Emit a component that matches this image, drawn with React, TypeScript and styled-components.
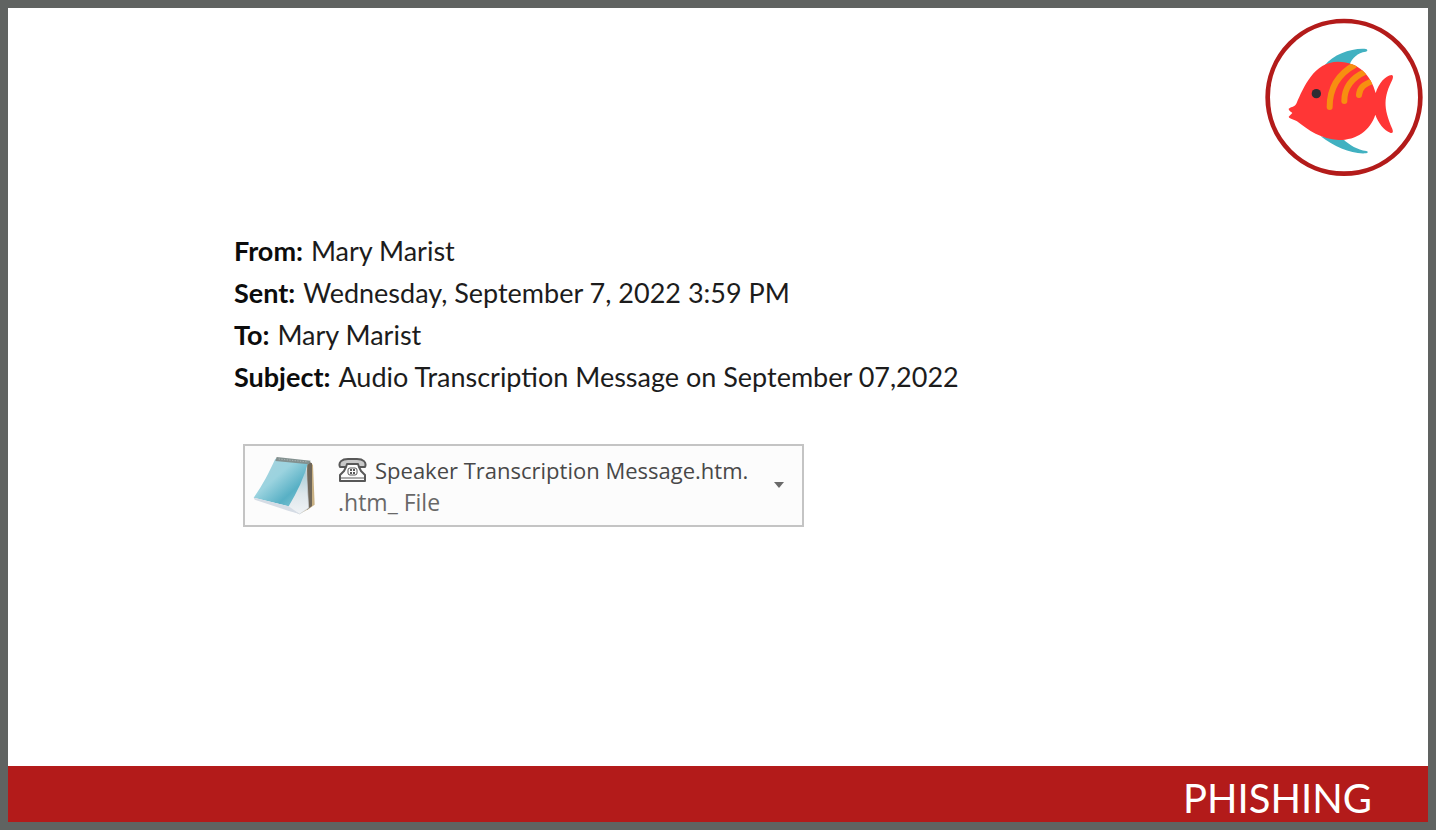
import React from "react";
import styled, { createGlobalStyle } from "styled-components";

const GlobalStyle = createGlobalStyle`
  * { box-sizing: border-box; }
  body { margin: 0; background: #606361; }
`;

const Frame = styled.div`
  display: flex;
  min-height: 100vh;
  padding: 8px;
  background: #606361;
`;

const Slide = styled.main`
  display: flex;
  flex: 1;
  flex-direction: column;
  background: #ffffff;
`;

const Header = styled.header`
  display: flex;
  justify-content: flex-end;
  padding: 10px 5px 0 0;
`;

const Logo = styled.svg`
  display: block;
  width: 158px;
  height: 158px;
`;

const Message = styled.section`
  flex: 1;
  padding: 54px 24px 40px 226px;
`;

const Fields = styled.dl`
  margin: 0;
  font-family: Lato, "Liberation Sans", sans-serif;
  font-size: 27px;
  line-height: 42px;
  color: #1c1c1c;
`;

const Field = styled.div`
  display: flex;
  gap: 8px;
`;

const Label = styled.dt`
  font-weight: 700;
  color: #0c0c0c;
`;

const Value = styled.dd`
  margin: 0;
`;

const Attachment = styled.button`
  display: flex;
  align-items: center;
  width: 561px;
  max-width: 100%;
  height: 83px;
  margin: 46px 0 0 9px;
  padding: 1px 17px 0 7px;
  border: 2px solid #c4c4c4;
  background: #fcfcfc;
  font-family: "Open Sans", "Noto Sans", sans-serif;
  font-size: 22px;
  line-height: 32px;
  text-align: left;
  color: #484848;
`;

const FileIcon = styled.svg`
  flex: none;
  width: 65px;
  height: 62px;
`;

const FileText = styled.span`
  display: flex;
  flex: 1;
  flex-direction: column;
  padding-left: 21px;
  white-space: nowrap;
`;

const FileName = styled.span`
  display: flex;
  align-items: center;
  gap: 8px;
`;

const FileType = styled.span`
  font-size: 23px;
  color: #686868;
`;

const PhoneIcon = styled.svg`
  flex: none;
  width: 29px;
  height: 26px;
`;

const Caret = styled.svg`
  flex: none;
  width: 12px;
  height: 8px;
`;

const Banner = styled.footer`
  display: flex;
  align-items: center;
  justify-content: flex-end;
  height: 56px;
  padding: 8px 56px 0 24px;
  background: #b31b1a;
`;

const Title = styled.h1`
  margin: 0;
  font-family: Lato, "Liberation Sans", sans-serif;
  font-size: 40px;
  font-weight: 400;
  line-height: 48px;
  color: #ffffff;
`;

const fields = [
  { label: "From:", value: "Mary Marist" },
  { label: "Sent:", value: "Wednesday, September 7, 2022 3:59 PM" },
  { label: "To:", value: "Mary Marist" },
  { label: "Subject:", value: "Audio Transcription Message on September 07,2022" },
];

function FishLogo() {
  return (
    <Logo viewBox="27 54 474 474" role="img" aria-label="Fish">
      <defs>
        <clipPath id="fish-body">
          <path d="M98 326 C108 319 117 321 122 309 C142 263 174 185 246 185 C309 185 346 228 359 279 C368 251 388 226 407 225 C412 226 412 232 409 239 C383 291 381 321 409 387 C412 395 411 400 404 399 C384 391 366 368 358 344 C342 392 302 420 248 420 C196 418 157 391 123 364 C116 358 101 358 98 350 L109 339 C105 334 99 334 98 326 Z" />
        </clipPath>
      </defs>
      <circle cx="264" cy="292" r="229" fill="#fff" stroke="#b31b1a" strokeWidth="14" />
      <path d="M206 196 C232 163 290 143 330 147 C336 149 335 154 329 155 C305 158 288 174 281 194 Z" fill="#41b1c1" />
      <path d="M194 409 C235 441 289 464 331 460 C337 458 337 454 331 453 C304 449 282 436 260 416 Z" fill="#41b1c1" />
      <path d="M98 326 C108 319 117 321 122 309 C142 263 174 185 246 185 C309 185 346 228 359 279 C368 251 388 226 407 225 C412 226 412 232 409 239 C383 291 381 321 409 387 C412 395 411 400 404 399 C384 391 366 368 358 344 C342 392 302 420 248 420 C196 418 157 391 123 364 C116 358 101 358 98 350 L109 339 C105 334 99 334 98 326 Z" fill="#ff3636" />
      <g clipPath="url(#fish-body)" fill="none" stroke="#f78f10" strokeWidth="18" strokeLinecap="round">
        <path d="M221 321 C221 265 243 224 296 195" />
        <path d="M265 303 C265 262 285 234 328 215" />
        <path d="M309 285 C311 262 324 252 352 243" />
      </g>
      <circle cx="181" cy="281" r="14" fill="#2d2d33" />
    </Logo>
  );
}

function NotepadIcon() {
  return (
    <FileIcon viewBox="50 63 195 186" aria-hidden="true">
      <defs>
        <linearGradient id="pad-cover" x1="0" y1="0" x2="1" y2="1">
          <stop offset="0" stopColor="#a9d3de" />
          <stop offset="0.4" stopColor="#9bd3df" />
          <stop offset="0.7" stopColor="#58b0c5" />
          <stop offset="1" stopColor="#8bcbd7" />
        </linearGradient>
        <linearGradient id="pad-page" x1="0" y1="0" x2="0" y2="1">
          <stop offset="0" stopColor="#8fc3cf" />
          <stop offset="0.6" stopColor="#dde6ea" />
          <stop offset="1" stopColor="#f0f3f6" />
        </linearGradient>
      </defs>
      <path d="M218 84 L233 92 L238 212 L219 226 L196 238 Z" fill="#c9b184" />
      <path d="M216 80 L230 88 L230 216 L214 228 Z" fill="#6f675a" />
      <path d="M212 86 L220 222 L193 240 L150 220 Z" fill="url(#pad-page)" stroke="#cbd2d8" strokeWidth="2" />
      <path d="M120 74 L218 86 C206 130 186 174 160 217 L55 191 C82 152 100 118 120 74 Z" fill="url(#pad-cover)" />
      <path d="M55 191 L160 217 L193 240 L158 230 L58 197 Z" fill="#d5dce5" />
      <path d="M124 69 L226 80 L221 91 L120 81 Z" fill="#82908f" />
      <path d="M130 75 L218 84" fill="none" stroke="#a9b4b4" strokeWidth="3" strokeDasharray="4 4" />
    </FileIcon>
  );
}

function TelephoneIcon() {
  return (
    <PhoneIcon viewBox="0 0 29 26" fill="none" stroke="#585858" strokeWidth="2" strokeLinejoin="round" aria-hidden="true">
      <path d="M2 10 C0 5 4 2 10 2 L19 2 C25 2 29 5 27 10 L21 10 L20 7 L9 7 L8 10 Z" fill="#c9c9c9" />
      <path d="M8 10 L6 14 L2 18 L2 24 L27 24 L27 18 L23 14 L21 10" />
      <path d="M3 21 L26 21" strokeWidth="1" />
      <rect x="10" y="11" width="9" height="7" rx="2" strokeWidth="1" />
      <path d="M12 13 L17 13 M12 16 L17 16" strokeWidth="2" strokeDasharray="2 1" />
    </PhoneIcon>
  );
}

export default function App() {
  return (
    <>
      <GlobalStyle />
      <Frame>
        <Slide>
          <Header>
            <FishLogo />
          </Header>
          <Message>
            <Fields>
              {fields.map((field) => (
                <Field key={field.label}>
                  <Label>{field.label}</Label>
                  <Value>{field.value}</Value>
                </Field>
              ))}
            </Fields>
            <Attachment type="button">
              <NotepadIcon />
              <FileText>
                <FileName>
                  <TelephoneIcon />
                  Speaker Transcription Message.htm.
                </FileName>
                <FileType>.htm_ File</FileType>
              </FileText>
              <Caret viewBox="0 0 12 8" aria-hidden="true">
                <path d="M1 0 L11 0 L6 6 Z" fill="#6a6a6a" />
              </Caret>
            </Attachment>
          </Message>
          <Banner>
            <Title>PHISHING</Title>
          </Banner>
        </Slide>
      </Frame>
    </>
  );
}
